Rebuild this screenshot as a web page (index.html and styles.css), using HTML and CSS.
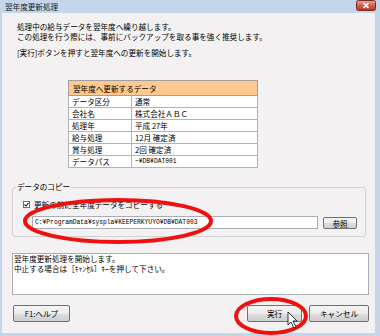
FILE: index.html
```html
<!DOCTYPE html>
<html lang="ja">
<head>
  <meta charset="UTF-8" />
  <title>翌年度更新処理</title>
  <link rel="stylesheet" href="styles.css">
</head>
<body>

<div class="window">
  <div class="titlebar">
    <span class="title">翌年度更新処理</span>
    <span class="close-btn">
      <svg width="20" height="11" viewBox="0 0 20 11">
        <defs>
          <linearGradient id="closeGrad" x1="0" y1="0" x2="0" y2="1">
            <stop offset="0" stop-color="#e9a89a"/>
            <stop offset="0.5" stop-color="#d0634f"/>
            <stop offset="1" stop-color="#b8321f"/>
          </linearGradient>
        </defs>
        <rect x="0.5" y="0.5" width="19" height="10" rx="2" fill="url(#closeGrad)" stroke="#7a2a20"/>
        <path d="M7.5 3 L12.5 8 M12.5 3 L7.5 8" stroke="#fff" stroke-width="1.6"/>
      </svg>
    </span>
  </div>

  <div class="client">
    <p class="intro">処理中の給与データを翌年度へ繰り越します。<br>この処理を行う際には、事前にバックアップを取る事を強く推奨します。</p>
    <p class="intro intro-note">[実行]ボタンを押すと翌年度への更新を開始します。</p>

    <!-- 更新対象データ -->
    <table class="data-table">
      <tr><th colspan="2">翌年度へ更新するデータ</th></tr>
      <tr><td class="label">データ区分</td><td>通常</td></tr>
      <tr><td class="label">会社名</td><td>株式会社ＡＢＣ</td></tr>
      <tr><td class="label">処理年</td><td>平成 27年</td></tr>
      <tr><td class="label">給与処理</td><td>12月 確定済</td></tr>
      <tr><td class="label">賞与処理</td><td>2回 確定済</td></tr>
      <tr><td class="label">データパス</td><td class="mono">~¥DB¥DAT001</td></tr>
    </table>

    <!-- データのコピー -->
    <fieldset class="copy-group">
      <legend>データのコピー</legend>
      <div class="check-row">
        <svg class="checkbox" width="7" height="7" viewBox="0 0 7 7">
          <rect x="0.5" y="0.5" width="6" height="6" fill="#fff" stroke="#707070"/>
          <path d="M1.5 3.5 L3 5 L5.5 1.8" fill="none" stroke="#222" stroke-width="1.1"/>
        </svg>
        <span>更新の前に全年度データをコピーする</span>
      </div>
      <div class="path-row">
        <div class="path-field mono">C:¥ProgramData¥syspla¥KEEPERKYUYO¥DB¥DAT003</div>
        <button class="btn btn-browse">参照</button>
      </div>
    </fieldset>

    <div class="message">翌年度更新処理を開始します。<br>中止する場合は［ｷｬﾝｾﾙ］ｷｰを押して下さい。</div>

    <div class="buttons">
      <button class="btn btn-help">F1:ヘルプ</button>
      <button class="btn btn-run">実行</button>
      <button class="btn btn-cancel">キャンセル</button>
    </div>
  </div>

  <!-- 赤い丸の注記とカーソル -->
  <svg class="marks" width="380" height="336" viewBox="0 0 380 336">
    <ellipse cx="118" cy="221" rx="93" ry="21" fill="none" stroke="#f01010" stroke-width="4"/>
    <ellipse cx="271" cy="316" rx="35" ry="17" fill="none" stroke="#f01010" stroke-width="4"/>
    <path d="M288 312 L288 325 L291 322 L294 328 L296 327 L293 321 L297 321 Z" fill="#fff" stroke="#000" stroke-width="0.8" stroke-linejoin="round"/>
  </svg>
</div>

</body>
</html>
```

FILE: styles.css
```css
* {
  margin: 0;
  padding: 0;
  box-sizing: border-box;
}

body {
  background: #fff;
}

.window {
  position: relative;
  width: 380px;
  height: 336px;
  background: #c6d6ea;
  padding: 0 5px 3px 2px;
  display: flex;
  flex-direction: column;
  font-family: "Noto Sans CJK JP", sans-serif;
  font-size: 7.6px;
  color: #000;
}

.titlebar {
  height: 13px;
  display: flex;
  align-items: center;
  justify-content: space-between;
  padding-left: 3px;
  color: #1a1a1a;
}

.close-btn {
  display: flex;
  margin-right: -1px;
  margin-top: -2px;
}

.client {
  flex: 1;
  background: #f3f1f1;
  display: flex;
  flex-direction: column;
}

.intro {
  margin: 9px 0 0 15px;
  line-height: 10px;
}

.intro-note {
  margin-top: 6px;
}

.mono {
  font-family: "Liberation Mono", monospace;
  font-size: 6.3px;
}

.data-table {
  align-self: flex-start;
  margin: 22px 0 0 66px;
  width: 190px;
  border-collapse: collapse;
  border: 1px solid #808080;
  background: #fff;
}

.data-table th {
  height: 15px;
  background: #fec98f;
  font-weight: normal;
  text-align: left;
  padding: 0 4px;
  border: 1px solid #a0a0a0;
}

.data-table td {
  height: 12px;
  line-height: 10px;
  padding: 0 3px;
  border: 1px solid #b4b4b4;
}

.data-table td.label {
  width: 63px;
}

.copy-group {
  margin: 14px 9px 0 10px;
  border: 1px solid #d2d2d2;
  border-radius: 3px;
  padding: 0 0 7px 0;
}

.copy-group legend {
  margin-left: 3px;
  padding: 0 1px;
  line-height: 10px;
}

.check-row {
  display: flex;
  align-items: center;
  height: 10px;
  margin: 7px 0 0 10px;
}

.checkbox {
  margin-right: 4px;
}

.path-row {
  display: flex;
  align-items: center;
  margin: 7px 0 0 19px;
}

.path-field {
  width: 286px;
  height: 13px;
  line-height: 11px;
  padding: 0 2px;
  background: #fff;
  border: 1px solid #abadb3;
}

.btn {
  font-family: "Noto Sans CJK JP", sans-serif;
  font-size: 7.6px;
  color: #000;
  border: 1px solid #707070;
  border-radius: 2px;
  background: linear-gradient(#f4f4f4, #ececec 50%, #dddddd 50%, #cfcfcf);
}

.btn-browse {
  width: 34px;
  height: 12px;
  margin-left: 5px;
}

.message {
  margin: 16px 6px 0 10px;
  height: 42px;
  padding: 0 1px;
  line-height: 9.5px;
  background: #fff;
  border: 1px solid #abadb3;
}

.buttons {
  display: flex;
  height: 17px;
  margin-top: 10px;
  padding: 0 6px 0 11px;
}

.btn-help {
  width: 57px;
}

.btn-run {
  width: 55px;
  margin-left: auto;
}

.btn-cancel {
  width: 60px;
  margin-left: 7px;
}

.marks {
  position: absolute;
  top: 0;
  left: 0;
  pointer-events: none;
}
```
